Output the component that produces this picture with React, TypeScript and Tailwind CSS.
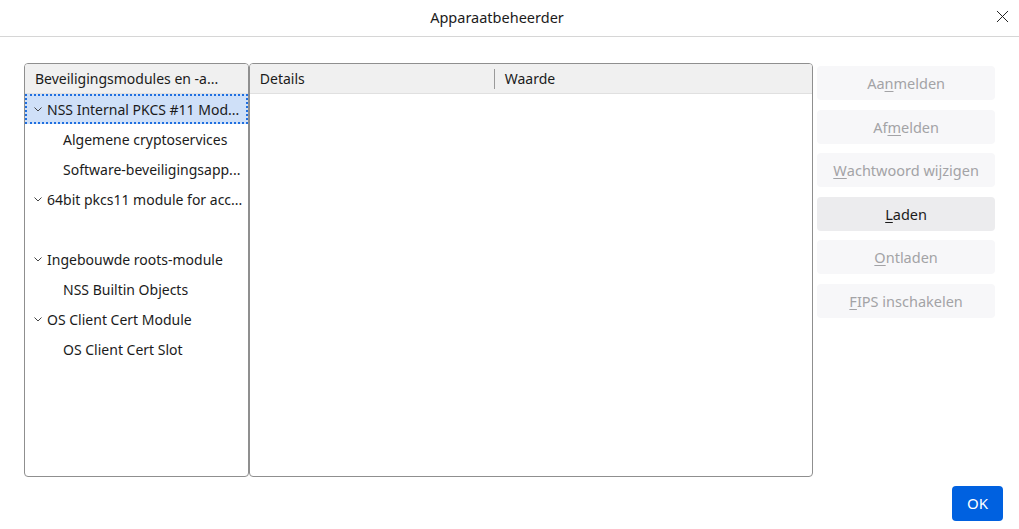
import { X } from "lucide-react";

const font = { fontFamily: '"Noto Sans", "Open Sans", sans-serif' };

type Row = { label: string; level: 0 | 1; selected?: boolean; blank?: boolean };

const rows: Row[] = [
  { label: "NSS Internal PKCS #11 Mod...", level: 0, selected: true },
  { label: "Algemene cryptoservices", level: 1 },
  { label: "Software-beveiligingsapp...", level: 1 },
  { label: "64bit pkcs11 module for acc...", level: 0 },
  { label: "", level: 1, blank: true },
  { label: "Ingebouwde roots-module", level: 0 },
  { label: "NSS Builtin Objects", level: 1 },
  { label: "OS Client Cert Module", level: 0 },
  { label: "OS Client Cert Slot", level: 1 },
];

const Chevron = () => (
  <svg width="10" height="10" viewBox="0 0 10 10" className="shrink-0">
    <path d="M1.5 3.5 L5 7 L8.5 3.5" fill="none" stroke="#444" strokeWidth="1" />
  </svg>
);

// label with an underlined access key
const AccessLabel = ({ text, keyIndex }: { text: string; keyIndex: number }) => (
  <>
    {text.slice(0, keyIndex)}
    <span className="underline underline-offset-2">{text[keyIndex]}</span>
    {text.slice(keyIndex + 1)}
  </>
);

const buttons = [
  { text: "Aanmelden", key: 2, enabled: false },
  { text: "Afmelden", key: 2, enabled: false },
  { text: "Wachtwoord wijzigen", key: 0, enabled: false },
  { text: "Laden", key: 0, enabled: true },
  { text: "Ontladen", key: 0, enabled: false },
  { text: "FIPS inschakelen", key: 0, enabled: false },
];

export default function App() {
  return (
    <div className="w-[1019px] h-[529px] bg-white flex flex-col text-[#1b1b1b] overflow-hidden" style={font}>
      {/* title bar */}
      <div className="h-[37px] shrink-0 flex items-center justify-center relative border-b border-[#d6d6d6] pr-[25px]">
        <span className="text-[14.5px]">Apparaatbeheerder</span>
        <X className="absolute right-[6px] top-[6px] w-[21px] h-[21px]" strokeWidth={1.1} />
      </div>

      <div className="flex flex-1 px-[24px] pt-[26px]">
        {/* module tree */}
        <div className="w-[225px] h-[414px] border border-[#8f8f8f] rounded-[4px] flex flex-col overflow-hidden">
          <div className="h-[30px] shrink-0 bg-[#f0f0f0] border-b border-[#e0e0e0] flex items-center px-[10px] text-[14px] whitespace-nowrap">
            Beveiligingsmodules en -a...
          </div>
          {rows.map((r, i) => (
            <div
              key={i}
              className={
                "h-[30px] shrink-0 flex items-center text-[14px] whitespace-nowrap " +
                (r.selected ? "bg-[#cfe0f8] outline-2 outline-dotted outline-[#1f6fe0] -outline-offset-2" : "")
              }
            >
              {r.blank ? null : r.level === 0 ? (
                <div className="flex items-center gap-[4px] pl-[8px]">
                  <Chevron />
                  <span>{r.label}</span>
                </div>
              ) : (
                <span className="pl-[38px]">{r.label}</span>
              )}
            </div>
          ))}
        </div>

        {/* details table */}
        <div className="w-[565px] h-[414px] border border-[#8f8f8f] rounded-[4px] flex flex-col overflow-hidden">
          <div className="h-[30px] shrink-0 bg-[#f0f0f0] border-b border-[#e0e0e0] flex items-center text-[14px]">
            <div className="w-[245px] h-[20px] flex items-center px-[10px] border-r border-[#9a9a9a]">Details</div>
            <div className="px-[10px]">Waarde</div>
          </div>
        </div>

        {/* action buttons */}
        <div className="ml-[4px] w-[178px] flex flex-col gap-[9.5px] pt-[3px]">
          {buttons.map((b) => (
            <div
              key={b.text}
              className={
                "h-[34px] rounded-[4px] flex items-center justify-center pt-[2px] text-[14.5px] " +
                (b.enabled ? "bg-[#ececee] text-[#1b1b1b]" : "bg-[#f7f7f9] text-[#a3a3a6]")
              }
            >
              <AccessLabel text={b.text} keyIndex={b.key} />
            </div>
          ))}
        </div>
      </div>

      {/* footer */}
      <div className="h-[43px] shrink-0 flex justify-end items-start pr-[16px]">
        <button className="w-[51px] h-[35px] rounded-[4px] bg-[#0061e0] text-white text-[15px]">OK</button>
      </div>
    </div>
  );
}
